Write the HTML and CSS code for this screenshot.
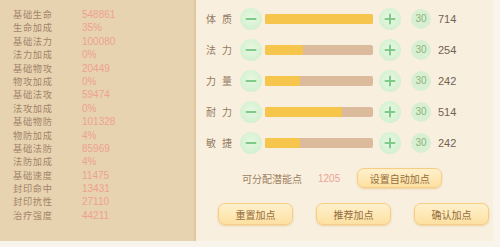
FILE: index.html
```html
<!DOCTYPE html>
<html lang="zh">
<head>
<meta charset="utf-8">
<link rel="stylesheet" href="styles.css">
</head>
<body>
<div class="screen">
  <div class="main">
    <div class="stats">
      <div class="stat"><span class="k">基础生命</span><span class="v">548861</span></div>
      <div class="stat"><span class="k">生命加成</span><span class="v">35%</span></div>
      <div class="stat"><span class="k">基础法力</span><span class="v">100080</span></div>
      <div class="stat"><span class="k">法力加成</span><span class="v">0%</span></div>
      <div class="stat"><span class="k">基础物攻</span><span class="v">20449</span></div>
      <div class="stat"><span class="k">物攻加成</span><span class="v">0%</span></div>
      <div class="stat"><span class="k">基础法攻</span><span class="v">59474</span></div>
      <div class="stat"><span class="k">法攻加成</span><span class="v">0%</span></div>
      <div class="stat"><span class="k">基础物防</span><span class="v">101328</span></div>
      <div class="stat"><span class="k">物防加成</span><span class="v">4%</span></div>
      <div class="stat"><span class="k">基础法防</span><span class="v">85969</span></div>
      <div class="stat"><span class="k">法防加成</span><span class="v">4%</span></div>
      <div class="stat"><span class="k">基础速度</span><span class="v">11475</span></div>
      <div class="stat"><span class="k">封印命中</span><span class="v">13431</span></div>
      <div class="stat"><span class="k">封印抗性</span><span class="v">27110</span></div>
      <div class="stat"><span class="k">治疗强度</span><span class="v">44211</span></div>
    </div>
    <div class="attrs">
      <div class="row">
        <span class="name">体质</span>
        <span class="btn-circle minus"><svg viewBox="0 0 22 22"><rect x="5.5" y="10" width="11" height="2" rx="1"/></svg></span>
        <span class="bar"><span class="fill" style="width:100%"></span></span>
        <span class="btn-circle plus"><svg viewBox="0 0 22 22"><rect x="5.5" y="10" width="11" height="2" rx="1"/><rect x="10" y="5.5" width="2" height="11" rx="1"/></svg></span>
        <span class="step">30</span>
        <span class="val">714</span>
      </div>
      <div class="row">
        <span class="name">法力</span>
        <span class="btn-circle minus"><svg viewBox="0 0 22 22"><rect x="5.5" y="10" width="11" height="2" rx="1"/></svg></span>
        <span class="bar"><span class="fill" style="width:35%"></span></span>
        <span class="btn-circle plus"><svg viewBox="0 0 22 22"><rect x="5.5" y="10" width="11" height="2" rx="1"/><rect x="10" y="5.5" width="2" height="11" rx="1"/></svg></span>
        <span class="step">30</span>
        <span class="val">254</span>
      </div>
      <div class="row">
        <span class="name">力量</span>
        <span class="btn-circle minus"><svg viewBox="0 0 22 22"><rect x="5.5" y="10" width="11" height="2" rx="1"/></svg></span>
        <span class="bar"><span class="fill" style="width:32%"></span></span>
        <span class="btn-circle plus"><svg viewBox="0 0 22 22"><rect x="5.5" y="10" width="11" height="2" rx="1"/><rect x="10" y="5.5" width="2" height="11" rx="1"/></svg></span>
        <span class="step">30</span>
        <span class="val">242</span>
      </div>
      <div class="row">
        <span class="name">耐力</span>
        <span class="btn-circle minus"><svg viewBox="0 0 22 22"><rect x="5.5" y="10" width="11" height="2" rx="1"/></svg></span>
        <span class="bar"><span class="fill" style="width:71%"></span></span>
        <span class="btn-circle plus"><svg viewBox="0 0 22 22"><rect x="5.5" y="10" width="11" height="2" rx="1"/><rect x="10" y="5.5" width="2" height="11" rx="1"/></svg></span>
        <span class="step">30</span>
        <span class="val">514</span>
      </div>
      <div class="row">
        <span class="name">敏捷</span>
        <span class="btn-circle minus"><svg viewBox="0 0 22 22"><rect x="5.5" y="10" width="11" height="2" rx="1"/></svg></span>
        <span class="bar"><span class="fill" style="width:32%"></span></span>
        <span class="btn-circle plus"><svg viewBox="0 0 22 22"><rect x="5.5" y="10" width="11" height="2" rx="1"/><rect x="10" y="5.5" width="2" height="11" rx="1"/></svg></span>
        <span class="step">30</span>
        <span class="val">242</span>
      </div>
      <div class="points">
        <span class="plabel">可分配潜能点</span>
        <span class="pval">1205</span>
        <span class="btn auto">设置自动加点</span>
      </div>
      <div class="actions">
        <span class="btn act">重置加点</span>
        <span class="btn act">推荐加点</span>
        <span class="btn act">确认加点</span>
      </div>
    </div>
    <div class="edge"></div>
  </div>
  <div class="foot"></div>
</div>
</body>
</html>
```
FILE: styles.css
```css
html, body {
  margin: 0;
  padding: 0;
  background: #f7f2e8;
}
body {
  font-family: "Noto Sans CJK SC", "Noto Sans", sans-serif;
}
.screen {
  width: 500px;
  height: 247px;
  display: flex;
  flex-direction: column;
  overflow: hidden;
}
.main {
  height: 241px;
  display: flex;
}
.foot {
  flex: 1;
  background: #f8f4ec;
}
.stats {
  width: 196px;
  background: #e8d3b0;
  border-right: 2px solid #dfc7a2;
  padding-top: 8px;
  box-sizing: border-box;
}
.stat {
  display: flex;
  height: 13.4px;
  align-items: center;
  font-size: 9.2px;
  line-height: 13.4px;
}
.stat .k {
  width: 69px;
  padding-left: 13px;
  letter-spacing: 0.7px;
  color: #a2836a;
}
.stat .v {
  color: #eca28f;
  font-family: "Liberation Sans", sans-serif;
  font-size: 10px;
}
.attrs {
  width: 297px;
  background: #f8efdf;
  padding-top: 3px;
  box-sizing: border-box;
  display: flex;
  flex-direction: column;
}
.edge {
  flex: 1;
  background: #faf5ec;
}
.row {
  height: 31px;
  display: flex;
  align-items: center;
  padding-left: 10px;
}
.name {
  width: 26px;
  font-size: 10px;
  letter-spacing: 6px;
  color: #957b60;
  white-space: nowrap;
}
.btn-circle {
  width: 22px;
  height: 22px;
  border-radius: 50%;
  background: radial-gradient(circle at 50% 45%, #e6f8e2 0%, #d6f1d2 65%, #cbeac7 100%);
  display: flex;
  flex-shrink: 0;
}
.btn-circle svg {
  width: 22px;
  height: 22px;
  fill: #7fca8a;
}
.minus {
  margin-left: 8px;
}
.bar {
  margin-left: 3px;
  width: 108px;
  height: 10px;
  background: #dcba9c;
  border-radius: 2px;
  display: flex;
}
.fill {
  height: 100%;
  background: #f6c64c;
  border-radius: 2px;
}
.plus {
  margin-left: 6px;
}
.step {
  margin-left: 10px;
  width: 20px;
  height: 20px;
  border-radius: 50%;
  background: #d8f0d1;
  color: #8cb27e;
  font-family: "Liberation Sans", sans-serif;
  font-size: 10px;
  display: flex;
  align-items: center;
  justify-content: center;
}
.val {
  margin-left: 7px;
  font-family: "Liberation Sans", sans-serif;
  font-size: 11px;
  color: #72624f;
}
.points {
  margin-top: 10px;
  height: 20px;
  display: flex;
  align-items: center;
  padding-left: 46px;
  font-size: 10px;
}
.plabel {
  color: #a0805e;
}
.pval {
  margin-left: 16px;
  color: #eca392;
  font-family: "Liberation Sans", sans-serif;
}
.btn {
  display: flex;
  align-items: center;
  justify-content: center;
  box-sizing: border-box;
  border-radius: 7px;
  background: linear-gradient(#fff1cc, #fde0a2);
  border: 1px solid #f6cd82;
  box-shadow: 0 1px 2px rgba(220, 170, 90, 0.45);
  color: #946e40;
  font-size: 10px;
}
.auto {
  margin-left: 17px;
  width: 85px;
  height: 20px;
}
.actions {
  margin-top: 15px;
  display: flex;
  padding-left: 22px;
  gap: 23px;
}
.act {
  width: 75px;
  height: 22px;
}
```
